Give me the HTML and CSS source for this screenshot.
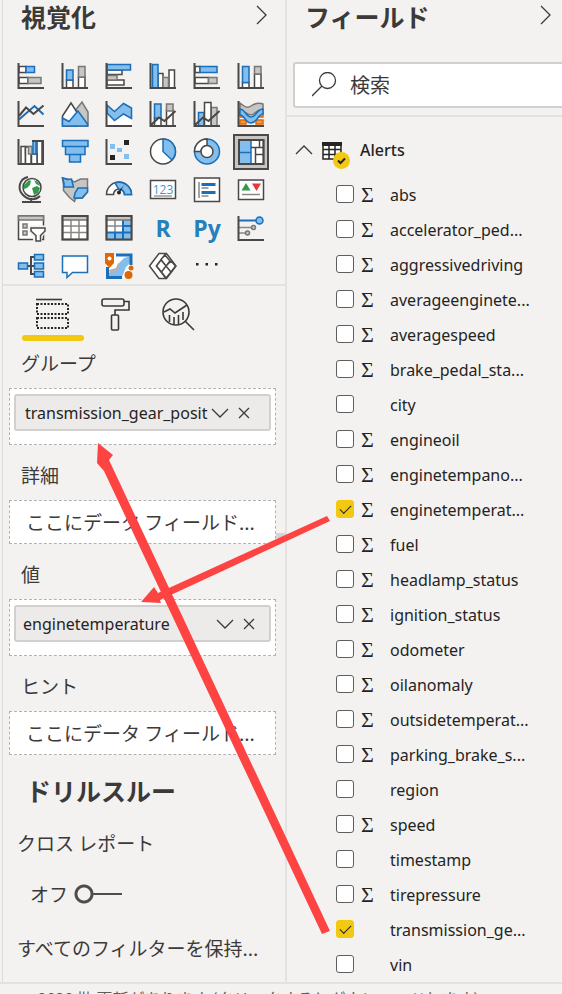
FILE: index.html
```html
<!DOCTYPE html>
<html lang="ja">
<head>
<meta charset="utf-8">
<title>視覚化とフィールド</title>
<link rel="stylesheet" href="styles.css">
</head>
<body>
<div class="workspace">
  <section class="pane visuals" aria-label="視覚化">
    <header class="pane-head">
      <h2>視覚化</h2>
      <button class="bare" type="button" aria-label="折りたたむ"><svg width="12" height="20" viewBox="0 0 12 20"><path class="thin" d="M1 1l9 9-9 9"/></svg></button>
    </header>

    <div class="gallery">
      <button type="button" aria-label="積み上げ横棒"><svg viewBox="0 0 28 28"><path class="w" d="M2 4.500h7v6h-7zM2 15.500h9v6h-9z"/><path class="b" d="M9 4.500h8.500v6h-8.500z"/><path class="g" d="M11 15.500h13v6h-13z"/><path class="ax" d="M1.500 1v25H27"/></svg></button>
      <button type="button" aria-label="積み上げ縦棒"><svg viewBox="0 0 28 28"><path class="w" d="M5.500 18h6.500v8h-6.500zM17.500 15h6.500v11h-6.500z"/><path class="b" d="M5.500 8h6.500v10h-6.500z"/><path class="g" d="M17.500 4.500h6.500v10.500h-6.500z"/><path class="ax" d="M1.500 1v25H27"/></svg></button>
      <button type="button" aria-label="集合横棒"><svg viewBox="0 0 28 28"><path class="w" d="M2 8h15v4.500h-15zM2 18h17v5h-17z"/><path class="g" d="M2 13.500h10v4.500h-10z"/><path class="b" d="M2 2.500h23.500v5.500h-23.500z"/><path class="ax" d="M1.500 1v25H27"/></svg></button>
      <button type="button" aria-label="集合縦棒"><svg viewBox="0 0 28 28"><path class="w" d="M9 11.500h5v14.500h-5zM20 8h5.500v18h-5.500z"/><path class="g" d="M14 15.500h5.500v10.500h-5.500z"/><path class="b" d="M3.500 2.500h5.500v23.500h-5.500z"/><path class="ax" d="M1.500 1v25H27"/></svg></button>
      <button type="button" aria-label="100% 積み上げ横棒"><svg viewBox="0 0 28 28"><path class="w" d="M2 4.500h5v6h-5zM2 15.500h13.500v6h-13.500z"/><path class="b" d="M7 4.500h17v6h-17z"/><path class="g" d="M15.500 15.500h8.500v6h-8.500z"/><path class="ax" d="M1.500 1v25H27"/></svg></button>
      <button type="button" aria-label="100% 積み上げ縦棒"><svg viewBox="0 0 28 28"><path class="w" d="M5.500 20.500h6.500v5.500h-6.500zM17.500 12h6.500v14h-6.500z"/><path class="b" d="M5.500 4.500h6.500v16h-6.500z"/><path class="g" d="M17.500 4.500h6.500v7.500h-6.500z"/><path class="ax" d="M1.500 1v25H27"/></svg></button>

      <button type="button" aria-label="折れ線"><svg viewBox="0 0 28 28"><path class="bl" d="M2 19.500L17.500 6l9 8.500"/><path class="ln" d="M2 16l7-8.500 7.500 6.500L26.500 5.500"/><path class="ax" d="M1.500 1v25H27"/></svg></button>
      <button type="button" aria-label="面"><svg viewBox="0 0 28 28"><path class="g" d="M13 12l8-10 6 10v14H13z"/><path class="w" d="M1.500 16L10 3l11 17-5 6H1.500z"/><path class="b" d="M1.500 18L8 21.500 17 11l9.500 13v2H1.500z"/></svg></button>
      <button type="button" aria-label="積み上げ面"><svg viewBox="0 0 28 28"><path class="wf" d="M2 11l7 9 9-7 9 5v8H2z"/><path class="b" d="M2 5l7.500 6.500 9-8 8 4.500v10.500l-8-4.500-9 6.500L2 13z"/><path class="ax" d="M1.500 1v25H27"/></svg></button>
      <button type="button" aria-label="折れ線と積み上げ縦棒"><svg viewBox="0 0 28 28"><path class="w" d="M5.500 18h6.500v8h-6.500zM17.500 10h6.500v16h-6.500z"/><path class="b" d="M5.500 4h6.500v14h-6.500z"/><path class="g" d="M17.500 4h6.500v7h-6.500z"/><path class="ax" d="M1.500 1v25H27M2 25l8-7.500 5.500 3.500L26.500 11"/></svg></button>
      <button type="button" aria-label="折れ線と集合縦棒"><svg viewBox="0 0 28 28"><path class="b" d="M5.500 12.500h5.500v13.500h-5.500z"/><path class="g" d="M18 7.500h6v18.500h-6z"/><path class="w" d="M11.500 2.500h6.500v23.500h-6.500z"/><path class="ax" d="M1.500 1v25H27M2 25l8-7.500 5.500 3.500L26.500 11"/></svg></button>
      <button type="button" aria-label="リボン"><svg viewBox="0 0 28 28"><path class="o" d="M3 12h5v5H3zM20 12h6v5h-6zM3 20h6v4H3zM19 20h7v4h-7z"/><path class="g" d="M3 3c6 5 8 5 11 3s7-4 12-2v6c-6-2-8 5-12 5S7 10 3 10z"/><path class="b" d="M3 9c5 0 6 8 11 8s6-8 12-8v5c-5 0-6 9-12 9S8 15 3 15z"/><path class="ax" d="M1.500 1v25H27"/></svg></button>

      <button type="button" aria-label="ウォーターフォール"><svg viewBox="0 0 28 28"><path class="w" d="M4 8.500h4.500v17.500H4zM20 3h5v23h-5z"/><path class="g" d="M8.500 8.500h5.500v6.500h-5.500z"/><path class="w" d="M8.500 9H14v17H8.500zM14.500 16H20v10h-5.500z"/><path class="g" d="M11.500 8.500H15V16h-3.500z"/><path class="b" d="M16 3h3v13h-3z"/><path class="ax" d="M1.500 1v25H27M15 3h11v23"/></svg></button>
      <button type="button" aria-label="じょうご"><svg viewBox="0 0 28 28"><path class="b" d="M1.500 2.500h25.500v6h-25.500zM4.500 8.500h19.500v8h-19.500zM8.500 16.500h11v7.500h-11z"/></svg></button>
      <button type="button" aria-label="散布図"><svg viewBox="0 0 28 28"><path class="bf" d="M5 6h5v5H5zM12 10h5v4h-5zM19 16h5v5h-5z"/><path class="dk" d="M19 2h5v5h-5zM5 17h5v5H5z"/><path class="ax" d="M1.500 1v25H27"/></svg></button>
      <button type="button" aria-label="円"><svg viewBox="0 0 28 28"><circle class="w" cx="14" cy="13.500" r="12.500"/><path class="b" d="M14 1a12.500 12.500 0 0 1 9 21l-9-8.500z"/></svg></button>
      <button type="button" aria-label="ドーナツ"><svg viewBox="0 0 28 28"><circle class="b" cx="14" cy="13.500" r="12.500"/><path class="w" d="M1.500 13.500A12.500 12.500 0 0 1 14 1v6.500a6 6 0 0 0-6 6z"/><circle class="w" cx="14" cy="13.500" r="6"/></svg></button>
      <button type="button" class="selected" aria-pressed="true" aria-label="ツリーマップ"><svg viewBox="0 0 28 28"><path class="w" d="M2 2h24.500v24H2z"/><path class="b" d="M2 2h12v12.500H2zM2 14.500h12V26H2z"/><path class="w" d="M14 9.500h12.500M18.500 9.500V26M18.500 16.500h8M22.500 2v7.500"/><path class="ax" d="M2 2h24.500v24H2z"/></svg></button>

      <button type="button" aria-label="マップ"><svg viewBox="0 0 28 28"><circle class="w" cx="15" cy="11.500" r="9"/><path class="gn" d="M7 9l5-5 2 1-1 4-3 3-3 1zM17 4l4 2 2 4-4-2zM15 12l5-2 3 2-2 5-4 2z"/><path class="ax" d="M11 1C2 3 0 13 6 19s13 5 17 1M14 22v4M5 26h19"/></svg></button>
      <button type="button" aria-label="塗り分け地図"><svg viewBox="0 0 28 28"><path class="g" d="M1.500 2l5 1 7 3 6-3h7v13l-5 6-7 .5-1 3-5-4-6-7V9z"/><path class="b" d="M1.500 2l5 1.500 4-.5 2 8H3V7zM17 12h9.500v4L21 22h-8l1-5z"/></svg></button>
      <button type="button" aria-label="ゲージ"><svg viewBox="0 0 28 28"><path class="w" d="M1.500 18.500a12.500 12.500 0 0 1 25 0h-7a5.500 5.500 0 0 0-11 0z"/><path class="b" d="M10 7a12.500 12.500 0 0 1 16.500 11.500h-7a5.500 5.500 0 0 0-6-5.500z"/><path class="dk" d="M19 9l-5 9-1-2z"/><circle class="dk" cx="14" cy="16.500" r="2"/></svg></button>
      <button type="button" aria-label="カード"><svg viewBox="0 0 28 28"><path class="w" d="M1.500 4.500h25v18h-25z"/><path class="gf" d="M5 19h18v2H5z"/><text class="num" x="14" y="18" text-anchor="middle">123</text></svg></button>
      <button type="button" aria-label="複数の行カード"><svg viewBox="0 0 28 28"><path class="w" d="M1.500 2h25v23.500h-25z"/><path class="gl" d="M6 6v16M8.500 12h7M8.500 20h7"/><path class="bl bold" d="M8.500 8.500h14M8.500 16.500h14"/></svg></button>
      <button type="button" aria-label="KPI"><svg viewBox="0 0 28 28"><path class="w" d="M1.500 4h25v19.500h-25z"/><path class="gn" d="M4.500 14.500h9L9 7z"/><path class="rd" d="M15 7.500h9L19.500 15z"/><path class="gl" d="M5 18.500h18"/></svg></button>

      <button type="button" aria-label="スライサー"><svg viewBox="0 0 28 28"><path class="w" d="M1.500 2h25v23.500h-25z"/><path class="g" d="M1.500 2h25v4h-25zM6 10h4v4H6zM6 17h4v4H6z"/><path class="halo" d="M14 14h13v3l-4.500 5v5h-4v-5L14 17z"/><path class="w" d="M14 14h14v3l-4.500 4.500v5.500h-4.500v-5.500L14 17z"/></svg></button>
      <button type="button" aria-label="テーブル"><svg viewBox="0 0 28 28"><path class="w" d="M1.500 2h25v23.500h-25z"/><path class="gl" d="M1.500 12h25M1.500 18.500h25M10 6v19.500M18 6v19.500"/><path class="g" d="M1.500 2h25v4h-25z"/><path class="ax" d="M1.500 2h25v23.500h-25z"/></svg></button>
      <button type="button" aria-label="マトリックス"><svg viewBox="0 0 28 28"><path class="w" d="M1.500 2h25v23.500h-25z"/><path class="bf" d="M18 6h8.500v19.500h-25v-7H18z"/><path class="gl" d="M1.500 12h16.500M10 6v12.500"/><path class="bl" d="M18 6v19.500M1.500 18.500h25M18 12h8.500M10 18.500v7"/><path class="g" d="M1.500 2h25v4h-25z"/><path class="ax" d="M1.500 2h25v23.500h-25z"/></svg></button>
      <button type="button" class="letters">R</button>
      <button type="button" class="letters">Py</button>
      <button type="button" aria-label="主要なインフルエンサー"><svg viewBox="0 0 28 28"><path class="bl" d="M2 6.500h18"/><path class="gl" d="M2 13.500h12M2 19h6"/><circle class="b" cx="22.500" cy="6.500" r="3.500"/><circle class="g" cx="16.500" cy="13.500" r="2"/><circle class="g" cx="10.500" cy="19" r="2"/><path class="ax" d="M1.500 2v24H27"/></svg></button>

      <button type="button" aria-label="分解ツリー"><svg viewBox="0 0 28 28"><path class="ax" d="M10 14h8M18 5h-4v17h4"/><path class="b" d="M1.500 11h9v6h-9zM17.500 2.500h9v5.500h-9zM17.500 11h9v6h-9zM17.500 19.500h9v5.500h-9z"/></svg></button>
      <button type="button" aria-label="Q&amp;A"><svg viewBox="0 0 28 28"><path class="w sb" d="M1.500 4h25v16.500h-15L6 25.500v-5H1.500z"/></svg></button>
      <button type="button" aria-label="ArcGIS マップ"><svg viewBox="0 0 28 28"><path class="wf" d="M2 3h24v23H2z"/><path class="bf" d="M3 25l0-4 8-2 3-8 5-5 7-2v6l-5 5-4 10z"/><path class="gf" d="M4 18l7-2 2-5 2 2-3 6-7 3z"/><path class="bl bold" d="M11 3h15v10M2.500 15v10.500H17"/><path class="orf" d="M0 1h9v10l-4.500 5L0 11z"/><circle class="wf" cx="4.500" cy="6.500" r="2"/><circle class="orf" cx="23.500" cy="23" r="4"/><circle class="orf" cx="26" cy="16" r="2.500"/></svg></button>
      <button type="button" aria-label="Power Apps"><svg viewBox="0 0 28 28"><path class="w" d="M10 1.500h7.500l9.500 12.500-9.500 12.500H10L.5 14zM17 1.500L7.500 14 17 26.500"/><path class="w" d="M12 7.500l4-4.500 5 6-4 5zM17 14l5-5 4.500 5-4.500 6zM7.500 14l4.500-6 5 6-4.500 6zM12.500 20l4.500-6 5 6-5 6z"/></svg></button>
      <button type="button" aria-label="その他"><svg viewBox="0 0 28 28"><path class="dk" d="M3 11h2.500v2.500H3zM12.500 11H15v2.500h-2.500zM22 11h2.500v2.500H22z"/></svg></button>
    </div>

    <nav class="tabs">
      <button type="button" class="active" aria-label="フィールド"><svg viewBox="0 0 34 36"><path class="tl" d="M0 2.500h26"/><path class="dots" d="M1 7h31v10H1zM1 21h31v10H1z"/></svg></button>
      <button type="button" aria-label="書式"><svg viewBox="0 0 34 36"><rect class="tl" x="3" y="2" width="22" height="7" rx="2"/><path class="tl" d="M25 4.500h5V13H16v5"/><rect class="tl" x="12.500" y="18" width="7" height="15" rx="1"/></svg></button>
      <button type="button" aria-label="分析"><svg viewBox="0 0 34 36"><circle class="tl" cx="14" cy="15" r="13"/><path class="tl" d="M23 24l9 9M2 15l6-3 5 4L25 8M7.500 18v7M12 20v7M16.500 18v9M21 15v8"/></svg></button>
    </nav>

    <div class="wells">
      <h3 class="well-label">グループ</h3>
      <div class="well filled">
        <div class="chip"><span>transmission_gear_posit</span>
          <button class="bare" type="button" aria-label="メニュー"><svg width="18" height="10" viewBox="0 0 18 10"><path class="thin" d="M1 1l8 8 8-8"/></svg></button>
          <button class="bare" type="button" aria-label="削除"><svg width="12" height="12" viewBox="0 0 12 12"><path class="thin" d="M1 1l10 10M11 1L1 11"/></svg></button>
        </div>
      </div>
      <h3 class="well-label">詳細</h3>
      <div class="well empty">ここにデータ フィールド...</div>
      <h3 class="well-label">値</h3>
      <div class="well filled">
        <div class="chip wide"><span>enginetemperature</span>
          <button class="bare" type="button" aria-label="メニュー"><svg width="18" height="10" viewBox="0 0 18 10"><path class="thin" d="M1 1l8 8 8-8"/></svg></button>
          <button class="bare" type="button" aria-label="削除"><svg width="12" height="12" viewBox="0 0 12 12"><path class="thin" d="M1 1l10 10M11 1L1 11"/></svg></button>
        </div>
      </div>
      <h3 class="well-label">ヒント</h3>
      <div class="well empty">ここにデータ フィールド...</div>
    </div>

    <div class="drill">
      <h2>ドリルスルー</h2>
      <p>クロス レポート</p>
      <label class="switch">オフ <input type="checkbox" role="switch"></label>
      <p>すべてのフィルターを保持...</p>
    </div>
  </section>

  <section class="pane fields" aria-label="フィールド">
    <header class="pane-head">
      <h2>フィールド</h2>
      <button class="bare" type="button" aria-label="折りたたむ"><svg width="12" height="20" viewBox="0 0 12 20"><path class="thin" d="M1 1l9 9-9 9"/></svg></button>
    </header>
    <div class="search-row">
      <label class="search">
        <svg width="26" height="26" viewBox="0 0 26 26"><circle class="thin" cx="15.500" cy="8.500" r="8"/><path class="thin" d="M10 14L0 24"/></svg>
        <input type="text" placeholder="検索" aria-label="検索">
      </label>
    </div>
    <div class="table-head">
      <button class="bare" type="button" aria-label="Alerts を閉じる"><svg width="18" height="10" viewBox="0 0 18 10"><path class="thin" d="M1 9l8-8 8 8"/></svg></button>
      <svg class="table-icon" width="28" height="28" viewBox="0 0 28 28"><path class="grid" d="M1 2h18v16H1zM1 8.500h18M1 13.500h18M7 5v13M13 5v13"/><path class="dk" d="M0 1h20v4H0z"/><circle class="badge" cx="19.500" cy="19.500" r="8.500"/><path class="tick" d="M16 19.500l2.500 2.500 4.500-4.500"/></svg>
      <h3>Alerts</h3>
    </div>
    <ul class="field-list">
      <li><label><input type="checkbox"><i>Σ</i><span>abs</span></label></li>
      <li><label><input type="checkbox"><i>Σ</i><span>accelerator_ped...</span></label></li>
      <li><label><input type="checkbox"><i>Σ</i><span>aggressivedriving</span></label></li>
      <li><label><input type="checkbox"><i>Σ</i><span>averageenginete...</span></label></li>
      <li><label><input type="checkbox"><i>Σ</i><span>averagespeed</span></label></li>
      <li><label><input type="checkbox"><i>Σ</i><span>brake_pedal_sta...</span></label></li>
      <li><label><input type="checkbox"><i></i><span>city</span></label></li>
      <li><label><input type="checkbox"><i>Σ</i><span>engineoil</span></label></li>
      <li><label><input type="checkbox"><i>Σ</i><span>enginetempano...</span></label></li>
      <li><label><input type="checkbox" checked><i>Σ</i><span>enginetemperat...</span></label></li>
      <li><label><input type="checkbox"><i>Σ</i><span>fuel</span></label></li>
      <li><label><input type="checkbox"><i>Σ</i><span>headlamp_status</span></label></li>
      <li><label><input type="checkbox"><i>Σ</i><span>ignition_status</span></label></li>
      <li><label><input type="checkbox"><i>Σ</i><span>odometer</span></label></li>
      <li><label><input type="checkbox"><i>Σ</i><span>oilanomaly</span></label></li>
      <li><label><input type="checkbox"><i>Σ</i><span>outsidetemperat...</span></label></li>
      <li><label><input type="checkbox"><i>Σ</i><span>parking_brake_s...</span></label></li>
      <li><label><input type="checkbox"><i></i><span>region</span></label></li>
      <li><label><input type="checkbox"><i>Σ</i><span>speed</span></label></li>
      <li><label><input type="checkbox"><i></i><span>timestamp</span></label></li>
      <li><label><input type="checkbox"><i>Σ</i><span>tirepressure</span></label></li>
      <li><label><input type="checkbox" checked><i></i><span>transmission_ge...</span></label></li>
      <li><label><input type="checkbox"><i></i><span>vin</span></label></li>
    </ul>
  </section>

  <svg class="arrows" width="562" height="982" viewBox="0 0 562 982" aria-hidden="true">
    <path class="mark" d="M276 533h10v5h-10z"/>
    <path d="M98 443l15 12-4 5 221 471-8 3L104 471l-7-8z"/>
    <path d="M141 602l13-15 4 6 169-77 3 5-170 79 1 3z"/>
  </svg>
</div>
<footer class="status">v. 2020 批 更新があります (クリックするとダウンロードします)</footer>
</body>
</html>
```
FILE: styles.css
```css
* { box-sizing: border-box; }

body {
  margin: 0;
  min-height: 100vh;
  overflow: hidden;
  background: #f3f2f1;
  color: #252423;
  font-family: "Noto Sans", "Noto Sans CJK JP", sans-serif;
  font-size: 16px;
}

h2, h3, p, ul { margin: 0; padding: 0; }
h2 { font-size: 25px; line-height: 32px; font-weight: 600; color: #3b3a39; }
h2, .drill, .wells { font-family: "Noto Sans CJK JP", sans-serif; }

.workspace {
  position: relative;
  display: grid;
  grid-template-columns: minmax(0, 285fr) minmax(0, 277fr);
  border-bottom: 2px solid #e3e2e1;
}

.visuals { margin-left: 2px; border-left: 1px solid #dddcda; }
.fields { border-left: 2px solid #e3e2e1; }

.pane-head {
  display: flex;
  justify-content: space-between;
  align-items: flex-start;
  height: 62px;
  padding: 0 18px;
}
.visuals .pane-head { padding-right: 17px; }
.fields .pane-head { padding-right: 10px; }
.pane-head .bare { margin-top: 5px; }

button { margin: 0; padding: 0; border: 0; background: none; color: inherit; font: inherit; }
button svg { display: block; }

/* Visual gallery */
.gallery {
  display: grid;
  grid-template-columns: repeat(6, 28px);
  gap: 10px 16px;
  padding: 0 14px 4px;
  border-bottom: 2px solid #e3e2e1;
}
.gallery button { width: 28px; height: 28px; }
.gallery svg { width: 28px; height: 28px; overflow: visible; }
.gallery .selected { background: #c8c6c4; outline: 2px solid #4a4948; outline-offset: 2px; box-shadow: 0 0 0 3px #c8c6c4; }
.gallery .letters {
  color: #2580be;
  font: bold 23px/26px "Open Sans", sans-serif;
}

.ax, .w, .ln { fill: none; stroke: #4a4846; stroke-width: 1.5; }
.w { fill: #fff; }
.ax { stroke-width: 2; }
.ln { stroke-width: 2; }
.b { fill: #83beec; stroke: #1a6fb8; stroke-width: 1.5; }
.bf { fill: #83beec; }
.bl { fill: none; stroke: #1a6fb8; stroke-width: 2; }
.bold { stroke-width: 3; }
.sb { stroke: #1a6fb8; }
.g { fill: #c8c6c4; stroke: #797775; stroke-width: 1.5; }
.gf { fill: #b5b3b1; }
.gl { fill: none; stroke: #8a8886; stroke-width: 1.5; }
.o { fill: #f79a3c; stroke: #d96a09; stroke-width: 1.5; }
.orf { fill: #dc6807; }
.gn { fill: #339a4b; }
.rd { fill: #e03a3a; }
.wf { fill: #fff; }
.dk { fill: #252423; }
.halo { fill: #f3f2f1; stroke: #f3f2f1; stroke-width: 5; }
.num { fill: #3a96dd; font: 12px "Open Sans", sans-serif; }
.thin { fill: none; stroke: #3b3a39; stroke-width: 1.3; }

/* Pane tabs */
.tabs { display: flex; gap: 1px; padding: 8px 0 0 19px; }
.tabs button { width: 62px; height: 47px; border-bottom: 6px solid transparent; }
.tabs svg { width: 34px; height: 36px; margin: 0 auto; }
.tabs .active { position: relative; }
.tabs .active::after {
  content: "";
  position: absolute;
  inset: auto 0 -6px;
  height: 6px;
  border-radius: 3px;
  background: #f2c811;
}
.tl { fill: none; stroke: #3b3a39; stroke-width: 1.6; }
.dots { fill: none; stroke: #252423; stroke-width: 2; stroke-dasharray: 2 1.500; }

/* Field wells */
.wells { padding: 0 9px 0 6px; font-size: 19px; color: #3b3a39; }
.well-label { padding: 18px 12px 13px; font-size: 19px; line-height: 24px; font-weight: 400; }
.well-label:first-child { padding-top: 10px; }
.well { border: 1px dashed #b3b0ad; background: #fff; }
.filled { height: 57px; padding: 5px 4px; }
.empty { height: 44px; padding-left: 16px; line-height: 42px; white-space: nowrap; overflow: hidden; }
.chip {
  display: flex;
  align-items: center;
  gap: 9px;
  height: 37px;
  padding: 0 19px 0 9px;
  border: 2px solid #d2d0ce;
  border-radius: 3px;
  background: #edebe9;
  color: #252423;
  font: 16px/24px "Noto Sans", sans-serif;
}
.chip span { flex: 1; min-width: 0; white-space: nowrap; }
.chip.wide { padding: 0 14px 0 7px; }

.drill { padding: 0 14px; font-size: 19px; line-height: 28px; color: #3b3a39; }
.drill h2 { padding: 19px 9px 3px; }
.drill p { padding-top: 20px; white-space: nowrap; overflow: hidden; }
.switch { display: flex; align-items: center; gap: 6px; padding: 23px 13px 6px; }
.switch input {
  appearance: none;
  width: 48px;
  height: 20px;
  margin: 0;
  background:
    radial-gradient(circle at 10px 10px, #f3f2f1 6px, #4f4d4b 7px, #4f4d4b 9px, transparent 10px),
    linear-gradient(#4f4d4b, #4f4d4b) 18px 9px / 30px 2px no-repeat;
}

/* Fields pane */
.search-row { padding: 0 0 7px 6px; border-bottom: 2px solid #e3e2e1; }
.search {
  display: flex;
  align-items: center;
  gap: 10px;
  height: 46px;
  padding-left: 17px;
  border: 2px solid #d2d0ce;
  border-right: 0;
  border-radius: 3px 0 0 3px;
  background: #fff;
}
.search input {
  flex: 1;
  min-width: 0;
  padding: 0 2px;
  border: 0;
  outline: 0;
  background: none;
  font: 20px/28px "Noto Sans CJK JP", sans-serif;
}
.search input::placeholder { color: #3b3a39; opacity: 1; }

.table-head { display: flex; align-items: center; height: 60px; padding: 6px 0 0 8px; }
.table-icon { margin: 10px 0 0 9px; }
.table-head h3 { margin-left: 10px; font-size: 16px; line-height: 24px; font-weight: 500; }
.grid { fill: #fff; stroke: #252423; stroke-width: 1.5; }
.badge { fill: #f2c811; }
.tick { fill: none; stroke: #252423; stroke-width: 2; }

.field-list { list-style: none; }
.field-list label { display: flex; align-items: center; height: 35px; padding-left: 49px; }
.field-list input {
  appearance: none;
  flex: none;
  width: 18px;
  height: 18px;
  margin: 0 0 2px;
  border: 1px solid #605e5c;
  border-radius: 3px;
  background: #fff;
}
.field-list input:checked { border-color: #f2c811; background: #f2c811; }
.field-list input:checked::after {
  content: "";
  display: block;
  width: 10px;
  height: 5px;
  margin: 4px 0 0 3px;
  border: solid #252423;
  border-width: 0 0 1px 1px;
  rotate: -45deg;
}
.field-list i { width: 36px; padding-left: 7px; font: 22px/24px "Liberation Serif", serif; }
.field-list span { white-space: nowrap; }

.arrows { position: absolute; left: 0; top: 0; pointer-events: none; fill: #fe4343; }
.mark { fill: #d6d5d4; }

.status {
  padding: 4px 22px 0;
  font-family: "Noto Sans CJK JP", sans-serif;
  font-size: 16px;
  line-height: 20px;
  white-space: nowrap;
  color: #605e5c;
}
```
